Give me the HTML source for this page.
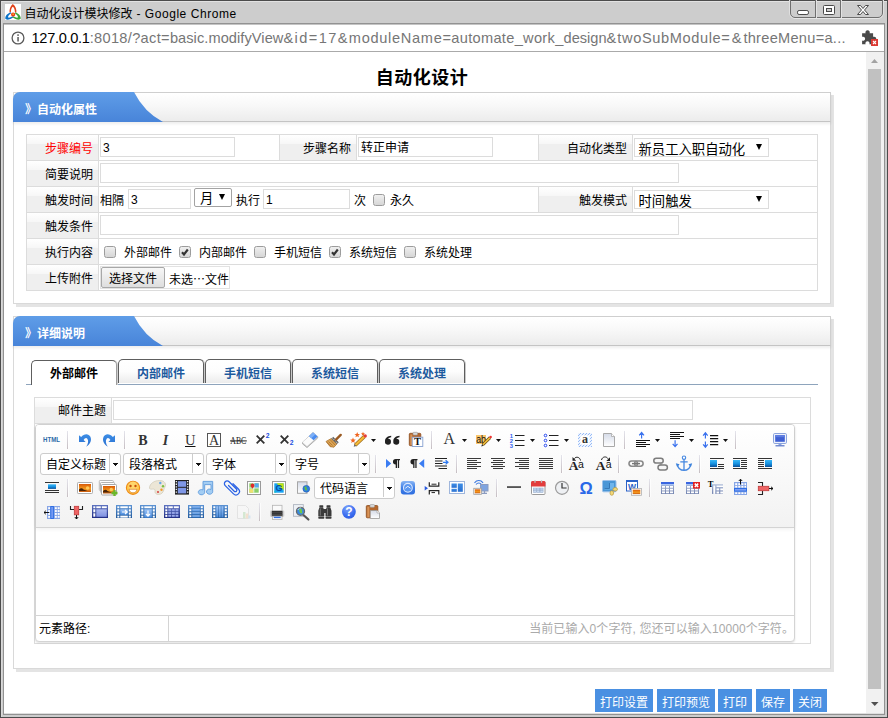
<!DOCTYPE html>
<html lang="zh-CN">
<head>
<meta charset="utf-8">
<title>自动化设计模块修改 - Google Chrome</title>
<style>
*{box-sizing:border-box;margin:0;padding:0}
html,body{width:888px;height:718px;overflow:hidden;background:#cdcdcd}
body{position:relative;font-family:"Liberation Sans","Noto Sans CJK SC",sans-serif;font-size:12px;color:#000}
.abs{position:absolute}
/* ---------- window frame ---------- */
#frame-outer{left:0;top:0;width:888px;height:718px;border:1px solid #4c4c4c}
#frame-hl{left:1px;top:1px;width:886px;height:716px;border-top:1px solid #e2e2e2;border-left:1px solid #d9d9d9}
#frame-inner{left:3px;top:23px;width:882px;height:692px;border:1px solid #929292;background:#fff;box-shadow:inset 0 1px 0 #c4c4c4, inset 0 -1px 0 #dedede}
#titletext{left:24.500px;top:5px;height:19px;line-height:19px;font-size:12px;color:#000;white-space:nowrap;font-family:"Liberation Sans","Noto Sans CJK SC",sans-serif}
#capbtns{left:790px;top:-1px;width:93px;height:19px;border:1px solid #6f6f6f;border-radius:0 0 5px 5px;box-shadow:0 1px 0 #e6e6e6, 1px 0 0 #e0e0e0, -1px 0 0 #e0e0e0}
#capbtns i{position:absolute;top:0;width:1px;height:18px;background:#6f6f6f;box-shadow:1px 0 0 #e2e2e2}
/* ---------- address bar ---------- */
#addr{left:4px;top:24px;width:880px;height:28px;background:#fff;border-top:1px solid #c4c4c4;border-bottom:1px solid #aaa}
#url{left:27.500px;top:3px;height:20px;line-height:20px;font-size:14.6px;color:#767676;white-space:nowrap;letter-spacing:0}
#url b{font-weight:normal;color:#000}
/* ---------- scrollbar ---------- */
#sb{left:866px;top:52px;width:18px;height:661px;background:#f1f1f1;overflow:hidden}
#sbthumb{left:2px;top:17px;width:13px;height:620px;background:#c1c1c1}
/* ---------- page ---------- */
#page{left:4px;top:52px;width:862px;height:661px;background:#fff;overflow:hidden}
#h1{left:9px;top:13px;width:818px;text-align:center;font-size:18px;font-weight:bold;line-height:26px;height:26px;letter-spacing:.5px}
.panel{left:9px;width:818px;border:1px solid #d9d9d9;background:#fff;box-shadow:3px 3px 0 #e4e4e4}
.phead{left:-1px;top:-1px;width:818px;height:30px;border:1px solid #cfcfcf;border-bottom-color:#c4c4c4;border-radius:7px 0 0 0;background:linear-gradient(#fff,#f9f9f9 40%,#ececec);box-shadow:0 2px 3px rgba(0,0,0,.07)}
.phead svg{position:absolute;left:-1px;top:-1px}
.phead span{position:absolute;left:11px;top:9px;line-height:16px;color:#fff;font-weight:bold;font-size:12px;white-space:nowrap}

/* ---------- form table ---------- */
.tbl{border:1px solid #dcdcdc;background:#fff}
.row{left:0;width:790px;height:26px;border-bottom:1px solid #dcdcdc}
.lab{top:0;height:25px;line-height:28px;overflow:hidden;text-align:right;padding-right:5px;background:linear-gradient(#fff 0,#f7f7f7 34%,#efefef 35%,#efefef 100%);border-right:1px solid #dcdcdc;white-space:nowrap}
.vd{top:0;width:1px;height:25px;background:#dcdcdc}
.inp{top:2px;height:20px;border:1px solid #dcdcdc;background:#fff;line-height:20px;padding-left:2px;font-size:12px;white-space:nowrap;overflow:hidden}
.txt{top:0;height:25px;line-height:28px;overflow:hidden;white-space:nowrap}
.sel{top:3px;height:19px;border:1px solid #dcdcdc;background:#fff;font-size:13.33px;line-height:21px;padding-left:3.5px;white-space:nowrap;overflow:hidden}
.sel:after{content:"";position:absolute;right:6px;top:5px;border:3px solid transparent;border-top:6px solid #000;border-bottom:0}
.cb{top:7px;width:12px;height:12px;border:1px solid #9c9c9c;border-radius:2.5px;background:linear-gradient(#efefef,#d6d6d6)}
.cb svg{position:absolute;left:0;top:0}

/* ---------- tabs ---------- */
.tab{top:42px;width:86px;height:24px;border:1px solid #5e5e5e;border-bottom:0;border-radius:5px 5px 0 0;background:linear-gradient(#fff,#fdfdfd 50%,#ececec);text-align:center;line-height:28px;overflow:hidden;font-weight:bold;color:#1d5a9e;box-shadow:1px 0 0 #c9c9c9}
.tab.on{top:43px;height:25px;background:#fff;color:#000;line-height:27px;border-right-color:#9c9c9c;box-shadow:1px 0 0 #d0d0d0}
/* ---------- editor ---------- */
#ed{left:0;top:26px;width:760px;height:218px;border:1px solid #d4d4d4;border-radius:4px;background:#fff;box-shadow:0 1px 2px rgba(0,0,0,.12)}
#tb{left:0;top:0;width:758px;height:103px;border-bottom:1px solid #d4d4d4;border-radius:3px 3px 0 0;background:linear-gradient(#fff,#f2f2f2);box-shadow:0 1px 4px rgba(0,0,0,.065)}
.sep{width:1px;height:18px;background:#c9bcbc;box-shadow:1px 0 0 #fff}
.cmb{width:81px;height:22px;border:1px solid #ccc;border-radius:3px;background:#fff;line-height:23px;padding-left:5px;font-size:12px;white-space:nowrap;overflow:hidden}
.cmb:before{content:"";position:absolute;right:10px;top:0;width:1px;height:19px;background:#ccc}
.cmb:after{content:"";position:absolute;right:2px;top:9px;width:5px;height:3px;background:linear-gradient(#111,#111) 0 0/5px 1px no-repeat,linear-gradient(#111,#111) 1px 1px/3px 1px no-repeat,linear-gradient(#111,#111) 2px 2px/1px 1px no-repeat}
.ic{width:24px;height:24px}
.ic svg{position:absolute;left:0;top:0}
.dd{width:0;height:0;border:2.5px solid transparent;border-top:3.5px solid #111;border-bottom:0}
#bb{left:0;top:190px;width:758px;height:26px;border-top:1px solid #d4d4d4;line-height:26px;overflow:hidden;font-size:12px}
.btn{top:637px;height:23px;background:#4a90e2;color:#fff;line-height:28px;overflow:hidden;text-align:center;font-size:12px}
</style>
</head>
<body>
<div class="abs" id="frame-outer"></div>
<div class="abs" id="frame-hl"></div>
<!-- title bar -->
<svg class="abs" style="left:5px;top:4px" width="16" height="16" viewBox="0 0 16 16">
 <rect width="16" height="16" fill="#fff"/>
 <path d="M7.800 0C10.600 2 11.900 6 11.300 8.800L9.900 8.100C9.900 5.600 9 3.500 7.800 2.700 6.700 3.500 5.900 5.600 5.900 8.100L4.600 8.800C4 6 5.300 2 7.800 0Z" fill="#e0421a"/>
 <path d="M5.600 8.200C2 9.500-.1 12.500.3 14.500.8 16.400 5.200 15.900 8.500 13.300L7.700 12.300C5.100 13.800 3.300 14 3.100 13.200 2.900 12 4.500 10.300 6.400 9.300Z" fill="#0a72c8"/>
 <path d="M10.400 8.200C14 9.500 16.100 12.500 15.700 14.500 15.200 16.400 10.800 15.900 7.500 13.300L8.300 12.300C10.900 13.800 12.700 14 12.900 13.200 13.100 12 11.500 10.300 9.600 9.300Z" fill="#3aa43a"/>
 <circle cx="8.100" cy="10.500" r="2.100" fill="#e8391c"/><circle cx="8.200" cy="10.200" r=".9" fill="#f8a820"/>
</svg>
<div class="abs" id="titletext">自动化设计模块修改<span style="letter-spacing:.55px"> - Google Chrome</span></div>
<div class="abs" id="capbtns"><i style="left:24px"></i><i style="left:49px"></i>
 <svg class="abs" style="left:0;top:0" width="91" height="18" viewBox="0 0 91 18">
  <rect x="6.5" y="10.5" width="11" height="4" rx="1.6" fill="#fff" stroke="#4a4a4a"/>
  <rect x="32.5" y="5.5" width="11" height="9" rx="1" fill="#fff" stroke="#4a4a4a"/>
  <rect x="35.5" y="8.500" width="5" height="3" fill="#cdcdcd" stroke="#4a4a4a"/>
  <path d="M66.5 5.5h3l2.5 3 2.500-3h3l-4 4.500 4 4.500h-3l-2.500-3-2.500 3h-3l4-4.500z" fill="#fff" stroke="#4a4a4a" stroke-width="1" stroke-linejoin="round"/>
 </svg>
</div>
<div class="abs" id="frame-inner"></div>
<!-- address bar -->
<div class="abs" id="addr">
 <svg class="abs" style="left:5.5px;top:4.5px" width="16" height="16" viewBox="0 0 16 16"><circle cx="8" cy="8" r="5.900" fill="none" stroke="#5a5a5a" stroke-width="1.300"/><rect x="7.300" y="7" width="1.500" height="4.500" fill="#5a5a5a"/><rect x="7.300" y="4.300" width="1.500" height="1.600" fill="#5a5a5a"/></svg>
 <div class="abs" id="url"><b style="letter-spacing:-.3px">127.0.0.1</b><span style="letter-spacing:.32px">:8018/?act=</span><span style="letter-spacing:.07px">basic.modifyView</span><span style="letter-spacing:1.39px">&amp;id=17&amp;</span><span style="letter-spacing:.69px">moduleName</span><span style="letter-spacing:.31px">=automate_work_</span>design<span style="letter-spacing:1px">&amp;</span><span style="letter-spacing:.62px">twoSubModule</span><span style="letter-spacing:1.9px">=&amp;</span><span style="letter-spacing:.28px">threeMenu=a...</span></div>
 <svg class="abs" style="left:857px;top:2px" width="24" height="22" viewBox="0 0 24 22">
  <path transform="translate(0 .3) scale(1.1)" d="M1 5.500h3.200a2 2 0 1 1 3.600 0H11v3.200a2 2 0 1 1 0 3.600V15.500H7.600a1.900 1.900 0 1 0-3.400 0H1v-3.400a1.900 1.900 0 1 0 0-3.400z" fill="#4a4a4a"/>
  <rect x="10" y="12" width="7" height="7" fill="#db3a34"/><path d="M12 14l3 3m0-3l-3 3" stroke="#fff" stroke-width="1.100"/>
 </svg>
</div>
<!-- scrollbar -->
<div class="abs" id="sb">
 <svg class="abs" style="left:0;top:0" width="18" height="17"><path d="M5 11l3.500-4 3.500 4z" fill="#a3a3a3"/></svg>
 <div class="abs" id="sbthumb"></div>
 <svg class="abs" style="left:0;top:645px" width="18" height="17"><path d="M5 5h7.500l-3.750 4z" fill="#505050"/></svg>
</div>
<!-- page -->
<div class="abs" id="page">
 <div class="abs" id="h1">自动化设计</div>

 <div class="abs panel" style="top:40px;height:212px">
  <div class="abs phead"><svg width="152" height="30" viewBox="0 0 152 30"><defs><linearGradient id="bg1" x1="0" y1="0" x2="0" y2="1"><stop offset="0" stop-color="#5f9de8"/><stop offset="1" stop-color="#4884d9"/></linearGradient></defs><path d="M0 30V7a7 7 0 0 1 7-7H121Q131 20 150 30z" fill="url(#bg1)"/></svg><span>》自动化属性</span></div>
  <div class="abs tbl" style="left:12px;top:41px;width:792px;height:157px">
   <div class="abs row" style="top:0">
    <div class="abs lab" style="left:0;width:72px;color:#f00">步骤编号</div>
    <div class="abs inp" style="left:73px;width:135px">3</div>
    <div class="abs vd" style="left:252px"></div>
    <div class="abs lab" style="left:253px;width:77px">步骤名称</div>
    <div class="abs inp" style="left:331px;width:135px">转正申请</div>
    <div class="abs vd" style="left:511px"></div>
    <div class="abs lab" style="left:512px;width:94px">自动化类型</div>
    <div class="abs sel" style="left:607px;width:135px">新员工入职自动化</div>
   </div>
   <div class="abs row" style="top:26px">
    <div class="abs lab" style="left:0;width:72px">简要说明</div>
    <div class="abs inp" style="left:73px;width:579px"></div>
   </div>
   <div class="abs row" style="top:52px">
    <div class="abs lab" style="left:0;width:72px">触发时间</div>
    <div class="abs txt" style="left:73px">相隔</div>
    <div class="abs inp" style="left:101px;width:63px">3</div>
    <div class="abs sel" style="left:167px;top:1px;width:38px;height:19px;border-color:#a3a3a3;border-radius:2px;line-height:20px;padding-left:5px">月</div>
    <div class="abs txt" style="left:209px">执行</div>
    <div class="abs inp" style="left:236px;width:87px">1</div>
    <div class="abs txt" style="left:327px">次</div>
    <div class="abs cb" style="left:346px"></div>
    <div class="abs txt" style="left:363px">永久</div>
    <div class="abs vd" style="left:511px"></div>
    <div class="abs lab" style="left:512px;width:94px">触发模式</div>
    <div class="abs sel" style="left:607px;width:135px">时间触发</div>
   </div>
   <div class="abs row" style="top:78px">
    <div class="abs lab" style="left:0;width:72px">触发条件</div>
    <div class="abs inp" style="left:73px;width:579px"></div>
   </div>
   <div class="abs row" style="top:104px">
    <div class="abs lab" style="left:0;width:72px">执行内容</div>
    <div class="abs cb" style="left:77px"></div><div class="abs txt" style="left:97px">外部邮件</div>
    <div class="abs cb" style="left:152px"><svg width="10" height="10" viewBox="0 0 10 10"><path d="M2 5.200l2 2.300 3.800-5" fill="none" stroke="#333" stroke-width="2.100"/></svg></div><div class="abs txt" style="left:172px">内部邮件</div>
    <div class="abs cb" style="left:227px"></div><div class="abs txt" style="left:247px">手机短信</div>
    <div class="abs cb" style="left:302px"><svg width="10" height="10" viewBox="0 0 10 10"><path d="M2 5.200l2 2.300 3.800-5" fill="none" stroke="#333" stroke-width="2.100"/></svg></div><div class="abs txt" style="left:322px">系统短信</div>
    <div class="abs cb" style="left:377px"></div><div class="abs txt" style="left:397px">系统处理</div>
   </div>
   <div class="abs row" style="top:130px;border-bottom:0">
    <div class="abs lab" style="left:0;width:72px">上传附件</div>
    <div class="abs" style="left:73px;top:1px;width:130px;height:23px;border:1px solid #e2e2e2"></div>
    <div class="abs" style="left:74px;top:2px;width:64px;height:21px;border:1px solid #a8a8a8;border-radius:2px;background:linear-gradient(#f7f7f7,#dedede);text-align:center;line-height:22px;font-size:12px;overflow:hidden">选择文件</div>
    <div class="abs txt" style="left:142px;font-family:'Noto Sans CJK SC','Liberation Sans',sans-serif">未选…文件</div>
   </div>
  </div>
 </div>


 <div class="abs panel" style="top:264px;height:353px">
  <div class="abs phead"><svg width="152" height="30" viewBox="0 0 152 30"><path d="M0 30V7a7 7 0 0 1 7-7H121Q131 20 150 30z" fill="url(#bg1)"/></svg><span>》详细说明</span></div>
  <div class="abs" style="left:12px;top:67px;width:792px;height:1px;background:#8ea4bc"></div>
  <div class="abs tab on" style="left:17px">外部邮件</div>
  <div class="abs tab" style="left:104px">内部邮件</div>
  <div class="abs tab" style="left:191px">手机短信</div>
  <div class="abs tab" style="left:278px">系统短信</div>
  <div class="abs tab" style="left:365px">系统处理</div>
  <div class="abs tbl" style="left:20px;top:80px;width:777px;height:247px">
   <div class="abs row" style="top:0;width:775px">
    <div class="abs lab" style="left:0;width:77px;line-height:26px">邮件主题</div>
    <div class="abs inp" style="left:78px;top:2px;width:580px;height:20px"></div>
   </div>
   <div class="abs" id="ed">
    <div class="abs" id="tb">

     <div class="abs cmb" style="left:4px;top:28px">自定义标题</div>
     <div class="abs cmb" style="left:87px;top:28px">段落格式</div>
     <div class="abs cmb" style="left:170px;top:28px">字体</div>
     <div class="abs cmb" style="left:253px;top:28px">字号</div>
     <div class="abs cmb" style="left:278px;top:52px">代码语言</div>
     <svg class="abs" id="tbsvg" style="left:0;top:0" width="758" height="102" viewBox="36 425 758 102">
      <defs>
       <linearGradient id="sepg" x1="0" y1="0" x2="0" y2="1"><stop offset="0" stop-color="#e4e4ec"/><stop offset="1" stop-color="#c6bec2"/></linearGradient>
       <linearGradient id="blu" x1="0" y1="0" x2="0" y2="1"><stop offset="0" stop-color="#3d8ee6"/><stop offset="1" stop-color="#2a6fd0"/></linearGradient>
       <linearGradient id="sq" x1="0" y1="0" x2="0" y2="1"><stop offset="0" stop-color="#38b8f8"/><stop offset=".55" stop-color="#1590e0"/><stop offset="1" stop-color="#0a4f98"/></linearGradient>
       <linearGradient id="pg" x1="0" y1="0" x2="0" y2="1"><stop offset="0" stop-color="#d5dbe8"/><stop offset="1" stop-color="#ffffff"/></linearGradient>
       <linearGradient id="sun" x1="0" y1="0" x2="0" y2="1"><stop offset="0" stop-color="#d85a08"/><stop offset=".6" stop-color="#f59a1e"/><stop offset="1" stop-color="#c85a10"/></linearGradient>
       <pattern id="hatch" width="3" height="3" patternUnits="userSpaceOnUse"><rect width="3" height="3" fill="#eef4ff"/><path d="M-1 1l2-2M0 3l3-3M2 4l2-2" stroke="#8fb6f5" stroke-width=".9"/></pattern>
       <linearGradient id="blu2" x1="0" y1="0" x2="0" y2="1"><stop offset="0" stop-color="#8ab6f4"/><stop offset=".5" stop-color="#3f7fe6"/><stop offset="1" stop-color="#2e6ee0"/></linearGradient>
       <linearGradient id="tbg" x1="0" y1="0" x2="0" y2="1"><stop offset="0" stop-color="#a9b8d8"/><stop offset="1" stop-color="#7585b0"/></linearGradient>
       <linearGradient id="dkb" x1="0" y1="0" x2="0" y2="1"><stop offset="0" stop-color="#5d73c0"/><stop offset="1" stop-color="#232f86"/></linearGradient>
       <linearGradient id="mdb" x1="0" y1="0" x2="0" y2="1"><stop offset="0" stop-color="#5c93d4"/><stop offset="1" stop-color="#245c9e"/></linearGradient>
       <linearGradient id="ltb" x1="0" y1="0" x2="0" y2="1"><stop offset="0" stop-color="#9ec4f6"/><stop offset="1" stop-color="#4d8fe0"/></linearGradient>
       <linearGradient id="lav" x1="0" y1="0" x2="0" y2="1"><stop offset="0" stop-color="#a9b8f0"/><stop offset="1" stop-color="#7f90e0"/></linearGradient>
       <radialGradient id="hlp" cx=".4" cy=".25" r=".9"><stop offset="0" stop-color="#7ea4fa"/><stop offset=".6" stop-color="#3a6cf0"/><stop offset="1" stop-color="#2a54d8"/></radialGradient>
       <path id="dd" d="M0 0h5l-2.500 3z" fill="#111"/>
       <g id="sepr"><rect width="1" height="18" fill="url(#sepg)"/><rect x="1" width="1" height="18" fill="#fff" opacity=".7"/></g>
       <path id="undo" d="M79 435.300V442h6.600l-2-2c1-1.700 2.600-2.600 3.700-1.300 1.400 1.600 1 4.900-1.100 8.100 3.800-2.500 5.900-6.300 4.200-10-1.800-3.800-6.500-3.200-9.200.100z"/>
      </defs>

      <g font-family="Liberation Serif,serif" fill="#333">
       <text x="43" y="442" font-family="Liberation Sans,sans-serif" font-size="7" font-weight="bold" fill="#2a6aa8" textLength="17" lengthAdjust="spacingAndGlyphs">HTML</text>
       <use href="#sepr" x="67" y="431"/>
       <use href="#undo" fill="url(#blu)"/>
       <use href="#undo" fill="url(#blu)" transform="translate(194 0) scale(-1 1)"/>
       <use href="#sepr" x="124" y="431"/>
       <text x="143" y="445" text-anchor="middle" font-weight="bold" font-size="14">B</text>
       <text x="165.500" y="445" text-anchor="middle" font-weight="bold" font-style="italic" font-size="14">I</text>
       <text x="190.200" y="445" text-anchor="middle" font-size="14.500">U</text>
       <rect x="185" y="446" width="10.500" height="1" fill="#111"/>
       <rect x="207.500" y="433.500" width="13" height="13" fill="#fff" stroke="#555"/>
       <text x="214" y="444.600" text-anchor="middle" font-size="14">A</text>
       <text x="230.300" y="443.800" font-size="11" textLength="16" lengthAdjust="spacingAndGlyphs" fill="#222">ABC</text>
       <rect x="230" y="440.400" width="16.800" height="1" fill="#222"/>
       <path d="M256.700 435.700l7.600 7.600m0-7.600l-7.600 7.600" stroke="#333" stroke-width="1.800" fill="none"/>
       <text x="265.800" y="438" font-family="Liberation Sans,sans-serif" font-weight="bold" font-size="6.800" fill="#1a4fe0">2</text>
       <path d="M280.700 435.700l7.600 7.600m0-7.600l-7.600 7.600" stroke="#333" stroke-width="1.800" fill="none"/>
       <text x="289.800" y="445.200" font-family="Liberation Sans,sans-serif" font-weight="bold" font-size="6.800" fill="#1a4fe0">2</text>
      </g>
      <!-- eraser -->
      <path d="M302.500 442.300L313 432.500l4.700 4v1.500L307 447.600l-4.500-3.800z" fill="#c9c9c9" stroke="#a3a3a3" stroke-width=".8"/>
      <path d="M302.500 442.300L313 432.500l4.700 4L307 446.200z" fill="#fbfbfb"/>
      <path d="M309 436.200l4-3.700 4.700 4-4.100 3.800z" fill="#4a8cf0"/>
      <path d="M309 436.200l4-3.700 2.300 2-4 3.700z" fill="#7db0f8"/>
      <!-- brush -->
      <path d="M331.200 438.600l5.600 5.400-2.800 3.200-3.800-.5-4.200-5.200 2.200-1.300z" fill="#dba556" stroke="#a56a24" stroke-width=".7"/>
      <path d="M328.500 441.500l4 4M330.500 440l4.500 5M327 442.300l4 4.200" stroke="#a0601c" stroke-width=".6"/>
      <path d="M332.200 437.600l5.600 5.600" stroke="#555" stroke-width="2.600"/>
      <path d="M332.200 437.600l5.600 5.600" stroke="#ddd" stroke-width="1.200" stroke-dasharray="1 1"/>
      <path d="M336 439.600l4.700-4.700" stroke="#9a5a22" stroke-width="2.400" stroke-linecap="round"/>
      <!-- autotypeset -->
      <path d="M355.200 445.200l9.300-8.800" stroke="#9a6a1c" stroke-width="3.600"/>
      <path d="M355.200 445.200l9.300-8.800" stroke="#f5b935" stroke-width="2.200"/>
      <path d="M353.700 446.800l.800-2.700 1.900 1.900z" fill="#666"/>
      <circle cx="365.200" cy="435.900" r="1.700" fill="#e43a3a"/>
      <g fill="#f0641e"><path id="star" d="M0-2.800l.8 1.900 2 .1-1.600 1.300.6 2L0 1.400l-1.800 1.100.6-2-1.600-1.300 2-.1z" transform="translate(357.200 434.800)"/><use href="#star" transform="translate(-4.200 5.600)"/><path d="M0-2l.6 1.400 1.400.1-1.100.9.400 1.400L0 1l-1.300.8.400-1.400-1.100-.9 1.400-.1z" transform="translate(363 433.800)"/></g>
      <use href="#dd" x="371" y="439"/>
      <g fill="#222"><path id="q6" d="M385 441.300c0-3.300 2.300-5.200 6.200-5.500v1.400c-1.900.4-2.800 1-3.100 1.500a3 3 0 1 1-3.100 2.600z"/><use href="#q6" x="8.300"/></g>
      <!-- pasteplain -->
      <rect x="409.300" y="433.300" width="11.500" height="12.400" rx="1" fill="#b5672c" stroke="#8c4c1e" stroke-width=".8"/>
      <rect x="410.300" y="434.500" width="2" height="10.500" fill="#d89458"/>
      <rect x="413" y="432.300" width="4.500" height="2.800" rx=".8" fill="#d8d8d8" stroke="#9a9a9a" stroke-width=".6"/>
      <rect x="412.200" y="437.200" width="10.600" height="9.300" fill="#fff" stroke="#86a0d0" stroke-width=".9"/>
      <text x="417.500" y="445" text-anchor="middle" font-family="Liberation Serif,serif" font-weight="bold" font-size="10.500" fill="#111">T</text>
      <use href="#sepr" x="431" y="431"/>
      <text x="449.400" y="443.800" text-anchor="middle" font-family="Liberation Serif,serif" font-size="16" fill="#333">A</text>
      <use href="#dd" x="462" y="439"/>
      <!-- backcolor -->
      <rect x="476" y="435" width="10" height="9" fill="#f9c66c"/>
      <text x="476.200" y="443.200" font-family="Liberation Sans,sans-serif" font-size="10.500" fill="#111" textLength="9.800" lengthAdjust="spacingAndGlyphs">ab</text>
      <path d="M482.800 444.800l7.200-7.200" stroke="#6a4a10" stroke-width="3"/>
      <path d="M482.800 444.800l7.200-7.200" stroke="#f2c23c" stroke-width="1.600"/>
      <path d="M481.300 446.400l.700-2.400 1.700 1.700z" fill="#333"/>
      <circle cx="490.600" cy="437" r="1.300" fill="#e33"/>
      <use href="#dd" x="496" y="439"/>
      <!-- lists -->
      <g font-family="Liberation Sans,sans-serif" font-weight="bold" font-size="5.800" fill="#2b5cf0"><text x="509.800" y="437.700">1</text><text x="509.800" y="442.600">2</text><text x="509.800" y="447.500">3</text></g>
      <path d="M515 435.500h9.500M515 440.500h9.500M515 445.500h9.500M549 435.500h9.500M549 440.500h9.500M549 445.500h9.500" stroke="#222" stroke-width="1.100"/>
      <use href="#dd" x="530" y="439"/>
      <g fill="#fff" stroke="#2446f0" stroke-width="1"><circle cx="545.500" cy="435.500" r="1.300"/><circle cx="545.500" cy="440.500" r="1.300"/><circle cx="545.500" cy="445.500" r="1.300"/></g>
      <use href="#dd" x="564" y="439"/>
      <!-- selectall -->
      <rect x="578" y="433" width="14" height="14" fill="url(#hatch)"/>
      <rect x="580.300" y="435.300" width="9.400" height="9.400" fill="#fff"/>
      <text x="585" y="443" text-anchor="middle" font-family="Liberation Serif,serif" font-weight="bold" font-size="12" fill="#333">a</text>
      <!-- cleardoc -->
      <path d="M603.500 433.500h8l3 3v10h-11z" fill="url(#pg)" stroke="#a9a9a9"/>
      <path d="M611.500 433.500v3h3" fill="#fff" stroke="#a9a9a9" stroke-width=".8"/>
      <use href="#sepr" x="624" y="431"/>
      <!-- rowspacing -->
      <path d="M641.600 438.500v-6M639.200 435.300l2.400-2.800 2.400 2.800M675.100 440.200v6M672.700 443.900l2.400 2.800 2.400-2.800M705.400 433v5.500M705.400 441.500v5.500M703.100 435.600l2.300-2.800 2.300 2.800M703.100 444.400l2.300 2.800 2.300-2.800" stroke="#3a72ee" stroke-width="1.200" fill="none"/>
      <path d="M636 440.500h14M636 442.500h10M636 444.500h14M636 446.500h10M670 432.500h14M670 434.500h10M670 436.500h14M670 438.500h10" stroke="#111" stroke-width="1"/>
      <use href="#dd" x="655" y="439"/>
      <use href="#dd" x="689" y="439"/>
      <path d="M710 435.600h8.200M710 438.600h8.200M710 441.600h8.200M710 444.600h8.200" stroke="#111" stroke-width="1.100"/>
      <use href="#dd" x="723" y="439"/>
      <use href="#sepr" x="735" y="431"/>
      <!-- fullscreen -->
      <rect x="773.500" y="433.500" width="13" height="10" rx="1.200" fill="#eef2fc" stroke="#8ba3dd"/>
      <rect x="775.200" y="435.200" width="9.600" height="6.600" fill="#3f60d3"/>
      <rect x="775.200" y="435.200" width="9.600" height="2" fill="#5f7ee2"/>
      <rect x="778.500" y="444" width="3" height="1.300" fill="#8ba3dd"/>
      <rect x="775.500" y="445.200" width="9" height="1.200" fill="#5573c8"/>

      <use href="#sepr" x="375" y="455"/>
      <path d="M386 459v9l5.200-4.500zM424.200 459v9l-5.200-4.500z" fill="#3a7cf2"/>
      <g fill="#222"><path d="M396 459h4v1.200h-.9v7.800h-1.300v-7.800h-.8v7.800h-1.300v-3.500a2.750 2.750 0 0 1 0-5.500z"/><path d="M413.500 459h4v1.200h-.9v7.800h-1.300v-7.800h-.8v7.800h-1.300v-3.500a2.750 2.750 0 0 1 0-5.500z"/></g>
      <path d="M435 458.500h12M435 461h7.500M435 463.500h7.500M435 466h12M438.500 468.500h8.500" stroke="#222" stroke-width="1.100"/>
      <path d="M443 462.300h4M445.600 460.200l2.400 2.100-2.400 2.100" stroke="#2f7af0" stroke-width="1.200" fill="none"/>
      <use href="#sepr" x="456" y="455"/>
      <path d="M467 458.5H481M467 460.5H477M467 462.5H481M467 464.5H477M467 466.5H481M467 468.5H477M491 458.5H505M493 460.5H503M491 462.5H505M493 464.5H503M491 466.5H505M493 468.5H503M515 458.5H529M519 460.5H529M515 462.5H529M519 464.5H529M515 466.5H529M519 468.5H529M539 458.5H553M539 460.5H553M539 462.5H553M539 464.5H553M539 466.5H553M539 468.5H553" stroke="#3a3a3a" stroke-width="1"/>
      <use href="#sepr" x="561" y="455"/>
      <!-- upper/lower case -->
      <g font-family="Liberation Serif,serif" fill="#222"><text x="573.500" y="470" text-anchor="middle" font-weight="bold" font-size="13.500">A</text><text x="580.800" y="468.200" text-anchor="middle" font-family="Liberation Sans,sans-serif" font-size="10.500" fill="#111">a</text>
      <text x="600.700" y="470" text-anchor="middle" font-weight="bold" font-size="13.500">A</text><text x="608.600" y="468.200" text-anchor="middle" font-family="Liberation Sans,sans-serif" font-size="10.500" fill="#111">a</text></g>
      <path d="M580.500 460.500c-.5-3.500-4.500-4.300-6.300-1.800M601.500 460c.8-3.600 5-4 6.500-1.300" stroke="#222" stroke-width="1" fill="none"/>
      <path d="M572.500 457v3.700h3.700zM610 457.200v3.700h-3.700z" fill="#222"/>
      <use href="#sepr" x="618" y="455"/>
      <!-- link -->
      <g fill="none" stroke="#8a8a8a" stroke-width="1.600"><rect x="629" y="461" width="8.500" height="5.200" rx="2.600"/><rect x="634.600" y="461" width="8.500" height="5.200" rx="2.600"/></g>
      <path d="M632 463.600h8" stroke="#777" stroke-width="1.400"/>
      <!-- unlink -->
      <g fill="#f6f6f6" stroke="#7d7d7d" stroke-width="1.500"><rect x="653.800" y="458.300" width="9.400" height="4.800" rx="2.400"/><rect x="658" y="465.100" width="9.400" height="4.800" rx="2.400"/></g>
      <path d="M660 463.300l1.500 1.800" stroke="#8a8a8a" stroke-width="2"/>
      <!-- anchor -->
      <g fill="none" stroke="#4688e0"><circle cx="684" cy="457.700" r="1.700" stroke-width="1.100" fill="#fff"/><path d="M684 459.500v10.500M680.300 461.800h7.400" stroke-width="1.300"/><path d="M677.300 464.300c.7 4 3.500 6 6.700 6s6-2 6.700-6" stroke-width="1.500"/></g>
      <path d="M675.800 463.300l3.800 1-2.500 2.600zM692.200 463.300l-3.800 1 2.500 2.600z" fill="#3c82dc"/>
      <use href="#sepr" x="699" y="455"/>
      <!-- image float -->
      <path d="M710 458.500h14M710 468.500h14M718 464.500h6M718 466.500h6M733 458.500h14M733 468.500h14M741 460.500h6M741 462.500h6M741 464.500h6M741 466.500h6M758 458.500h14M758 468.500h14M758 460.500h6M758 462.500h6M758 464.500h6M758 466.500h6" stroke="#333" stroke-width="1"/>
      <rect x="710" y="460" width="7" height="7" fill="url(#sq)"/><rect x="733" y="460" width="7" height="7" fill="url(#sq)"/><rect x="765" y="460" width="7" height="7" fill="url(#sq)"/>


      <!-- imagecenter -->
      <path d="M45 482.500h14M45 490.500h14M45 492.500h14" stroke="#333" stroke-width="1"/>
      <rect x="48" y="484.300" width="8" height="4.600" fill="url(#sq)"/>
      <use href="#sepr" x="67" y="479"/>
      <!-- simpleupload -->
      <g id="pic"><rect x="77.500" y="482.500" width="15" height="11" rx=".8" fill="#fff" stroke="#aeaeae"/><rect x="79" y="484" width="12" height="8" fill="url(#sun)"/><circle cx="87.600" cy="488" r="1.800" fill="#ffd060" opacity=".9"/><path d="M79 489.500c2-2 3.500-1 4.500 0l4 1.500h-8.500z" fill="#4a2408"/></g>
      <!-- insertimage -->
      <rect x="99.300" y="480.500" width="14" height="10" rx=".8" fill="#fff" stroke="#b9b9b9"/>
      <rect x="100.500" y="482.500" width="14" height="10" rx=".8" fill="#fff" stroke="#b4b4b4"/>
      <rect x="101.500" y="484.500" width="15" height="10.500" rx=".8" fill="#fff" stroke="#a8a8a8"/><rect x="103" y="486" width="12" height="7.500" fill="url(#sun)"/><circle cx="111.300" cy="489.500" r="1.700" fill="#ffd060" opacity=".9"/><path d="M103 491c2-2 3.500-1 4.500 0l4 1.500h-8.500z" fill="#4a2408"/>
      <path d="M114.500 490v6M111.500 493h6" stroke="#6cb82a" stroke-width="2.300"/>
      <!-- emotion -->
      <circle cx="133" cy="487.800" r="6.600" fill="#ffc94d" stroke="#ee8a18" stroke-width="1.100"/>
      <circle cx="133" cy="486" r="4.500" fill="#ffe082" opacity=".6"/>
      <circle cx="130.500" cy="486" r="1.200" fill="#c8500a"/><circle cx="135.500" cy="486" r="1.200" fill="#c8500a"/>
      <path d="M129 489.300h8c-.5 2.700-2.200 3.500-4 3.500s-3.500-.8-4-3.500z" fill="#fff" stroke="#d06a10" stroke-width=".6"/>
      <!-- scrawl -->
      <path d="M149.500 488c0-4.500 5-7.500 10-7.500 4 0 6 2 6 4.500 0 2-1.200 2.600-1.600 4.500-.5 2.800-2.400 5-5.400 5-2.500 0-3.800-1.600-3.500-3.300.3-1.600-.5-2.400-2.500-2.100-1.800.3-3-.1-3-1.100z" fill="#ece6d6" stroke="#cfc8b4" stroke-width=".7"/>
      <circle cx="160.300" cy="483" r="1.200" fill="#6aa8e8"/><circle cx="163" cy="486.300" r="1.200" fill="#7cc040"/><circle cx="161.500" cy="489.800" r="1.200" fill="#f09a30"/><circle cx="158" cy="492" r="1.100" fill="#d84a4a"/>
      <!-- video -->
      <rect x="175" y="480" width="14" height="14.600" fill="#222"/>
      <rect x="177.800" y="481.200" width="8.400" height="5.600" fill="#7f97e6"/><rect x="177.800" y="487.800" width="8.400" height="5.600" fill="#7f97e6"/>
      <path d="M176.300 481v13M187.700 481v13" stroke="#fff" stroke-width="1.200" stroke-dasharray="1.300 1.300"/>
      <!-- music -->
      <path d="M203 481.400h9.700v10.300a3.100 2.500 0 1 1-1.700-2.200v-4.900h-6.300v7.600a3.200 2.600 0 1 1-1.700-2.300z" fill="#a3cdf3" stroke="#5f9bdc" stroke-width=".9" stroke-linejoin="round"/>
      <!-- attachment -->
      <path d="M228.500 485.500l5.700 5.700a1.500 1.500 0 0 0 2.200-2.200l-7.300-7.300a2.700 2.700 0 0 0-3.900 3.900l8.300 8.300a3.400 3.400 0 0 0 4.900-4.900l-5.400-5.400" fill="none" stroke="#2a62e4" stroke-width="1.250" stroke-linecap="round"/>
      <!-- map -->
      <rect x="247.500" y="481.500" width="13" height="13" fill="#fff" stroke="#9a9a9a"/>
      <rect x="249.300" y="483.300" width="9.400" height="9.400" fill="#8ccf6a"/><rect x="254.500" y="483.300" width="4.200" height="4.500" fill="#58a8ee"/><rect x="249.300" y="489" width="4" height="3.700" fill="#f0e070"/><path d="M249.300 488h9.400M253.800 483.300v9.400" stroke="#fff" stroke-width=".8"/><path d="M252.500 483.500a1.900 1.900 0 0 1 1.900 1.900c0 1.400-1.900 3-1.900 3s-1.900-1.600-1.900-3a1.900 1.900 0 0 1 1.900-1.900z" fill="#e02a2a"/>
      <!-- gmap -->
      <rect x="272.500" y="481.500" width="13" height="13" fill="#fff" stroke="#9a9a9a"/>
      <rect x="274.300" y="483.300" width="9.400" height="9.400" fill="#18a2f2"/><path d="M276.500 483.300h7.200v7.200z" fill="#c5e414"/><path d="M274.300 490.500l2.200 2.200h-2.200z" fill="#20c8c0"/>
      <text x="279" y="491.400" text-anchor="middle" font-family="Liberation Sans,sans-serif" font-weight="bold" font-size="9" fill="#0b4aa0">G</text>
      <!-- insertframe -->
      <rect x="297.500" y="481.800" width="9.500" height="11.500" fill="url(#pg)" stroke="#a6a6a6"/>
      <circle cx="306.300" cy="488.800" r="3.400" fill="#2f7fe0" stroke="#1c58b0" stroke-width=".6"/><path d="M304.300 487.300c1-1.600 2.600-.8 2.200.5-.3 1 1 1 .6 2.200-.4 1-1.800.3-2-.6z" fill="#60c040"/>
      <!-- webapp -->
      <rect x="400.800" y="481" width="14.200" height="13.600" rx="3" fill="url(#blu2)"/>
      <circle cx="407.900" cy="487.800" r="4.400" fill="#5b97f0" stroke="#dbe8ff" stroke-width="1.100"/><path d="M405.300 488.300l2.600-2 2.600 2" stroke="#e8f0ff" stroke-width="1" fill="none"/>
      <!-- pagebreak -->
      <path d="M424.700 486v4.600l3.300-2.300z" fill="#2a5ae0"/>
      <path d="M429.300 482.200v4h9.500v-4M429.300 494.600v-4h9.500v4" fill="#fff" stroke="#222" stroke-width="1.200"/><path d="M431.500 484.200h5M431.500 492.600h3.500" stroke="#222" stroke-width="1"/>
      <!-- template -->
      <rect x="449.500" y="481.500" width="15" height="12" fill="#fff" stroke="#9fb6dc"/>
      <rect x="451.500" y="483.500" width="5.300" height="4.300" fill="url(#blu)"/><rect x="451.500" y="488.800" width="5.300" height="3" fill="url(#blu)"/><rect x="457.800" y="483.500" width="5" height="8.300" fill="url(#blu)"/>
      <!-- background -->
      <path d="M476 484.500c1.500-2 4-2 5.500 0M474.500 482.800c2.400-3 6.200-3 8.600 0" stroke="#3a78e0" stroke-width="1.100" fill="none"/>
      <rect x="480.500" y="484.500" width="7.500" height="6.500" fill="#7fa4e0" stroke="#8c9cc0"/><path d="M482 493.300h5M484.500 491v2" stroke="#8c9cc0" stroke-width="1.200"/>
      <rect x="473.800" y="488.300" width="7.600" height="6" fill="#fff" stroke="#9a9a9a" stroke-width=".8"/><rect x="474.800" y="489.300" width="5.600" height="4" fill="url(#sun)"/>
      <use href="#sepr" x="496" y="479"/>
      <!-- horizontal -->
      <rect x="507" y="486.400" width="14" height="1.300" fill="#111"/>
      <!-- date -->
      <rect x="531.500" y="481.500" width="13.500" height="13" rx="1" fill="#fff" stroke="#9a9a9a"/>
      <path d="M531 482.500a1.500 1.500 0 0 1 1.500-1.500h11.500a1.500 1.500 0 0 1 1.500 1.500v4h-14.500z" fill="#e23c3c"/>
      <path d="M535 480.300v2.400M541.500 480.300v2.400" stroke="#c0c0c0" stroke-width="1.300"/>
      <g fill="#c6d8f0" stroke="#8ea6c8" stroke-width=".5"><rect x="533.500" y="488" width="3" height="2"/><rect x="536.800" y="488" width="3" height="2"/><rect x="540.100" y="488" width="3" height="2"/><rect x="533.500" y="490.500" width="3" height="2"/><rect x="536.800" y="490.500" width="3" height="2"/><rect x="540.100" y="490.500" width="3" height="2"/></g>
      <!-- time -->
      <circle cx="562" cy="487.800" r="6.500" fill="#eef0f3" stroke="#9a9a9a" stroke-width="1.200"/>
      <path d="M562 483v5h4.600" stroke="#333" stroke-width="1.200" fill="none"/>
      <!-- spechars -->
      <text x="586.100" y="493.800" text-anchor="middle" font-family="Liberation Sans,sans-serif" font-weight="bold" font-size="16.500" fill="#2a68e8">Ω</text>
      <!-- snapscreen -->
      <rect x="602.500" y="480.500" width="13.500" height="11.300" rx="1" fill="#4a96d6" stroke="#9cc0ea"/>
      <path d="M604.500 488h5v-5h4.500v6.500h-9.500z" fill="#79bdf0" opacity=".8"/><path d="M609.500 483v5.500h-5" stroke="#2a6aa8" stroke-width=".8" fill="none"/>
      <g fill="#f2d878" stroke="#b8963a" stroke-width=".7"><ellipse cx="615.200" cy="489.300" rx="2.300" ry="1.800"/><ellipse cx="611.800" cy="493" rx="1.800" ry="2.300"/></g>
      <!-- wordimage -->
      <rect x="626.500" y="480.500" width="11" height="10.500" fill="#fff" stroke="#2c63c8"/><rect x="626" y="480" width="12" height="2" fill="#2c63c8"/>
      <text x="632" y="489.800" text-anchor="middle" font-family="Liberation Sans,sans-serif" font-weight="bold" font-size="8.500" fill="#2a62c6">W</text>
      <rect x="631.500" y="488.500" width="10" height="6.800" fill="#fff" stroke="#b0b0b0" stroke-width=".8"/><rect x="632.700" y="489.700" width="7.600" height="4.400" fill="url(#sun)"/>
      <use href="#sepr" x="649" y="479"/>
      <!-- inserttable -->
      <g id="tblic"><rect x="661" y="482" width="13" height="12" fill="url(#tbg)"/><rect x="661" y="482" width="13" height="2" fill="#3a66e0"/><rect x="661" y="484" width="13" height="1.300" fill="#a9c4f4"/>
      <g fill="#fff"><rect x="662" y="486" width="3" height="1.800"/><rect x="666" y="486" width="3" height="1.800"/><rect x="670" y="486" width="3" height="1.800"/><rect x="662" y="488.700" width="3" height="1.800"/><rect x="666" y="488.700" width="3" height="1.800"/><rect x="670" y="488.700" width="3" height="1.800"/><rect x="662" y="491.400" width="3" height="1.800"/><rect x="666" y="491.400" width="3" height="1.800"/><rect x="670" y="491.400" width="3" height="1.800"/></g></g>
      <!-- deletetable -->
      <use href="#tblic" x="25"/>
      <rect x="693" y="482" width="7" height="6.600" fill="#e32222"/><path d="M694.800 483.600l3.400 3.400m0-3.400l-3.400 3.400" stroke="#fff" stroke-width="1.500"/>
      <!-- insertparagraphbeforetable -->
      <text x="710.600" y="487" text-anchor="middle" font-family="Liberation Serif,serif" font-weight="bold" font-size="8.500" fill="#000">T</text>
      <rect x="712" y="484.300" width="11" height="9.600" fill="url(#tbg)"/><g fill="#fff"><rect x="713.300" y="485.500" width="2" height="8.400"/><rect x="716.500" y="485.500" width="6.500" height="1.600"/><rect x="716.500" y="488.400" width="2.600" height="2"/><rect x="720.300" y="488.400" width="2.700" height="2"/><rect x="716.500" y="491.500" width="2.600" height="2"/><rect x="720.300" y="491.500" width="2.700" height="2"/></g>
      <!-- insertrow -->
      <rect x="734" y="482" width="13" height="13" fill="#88a6e6"/>
      <g fill="#fff"><rect x="735.200" y="483.200" width="2" height="2"/><rect x="738.300" y="483.200" width="2" height="2"/><rect x="741.400" y="483.200" width="2" height="2"/><rect x="744.500" y="483.200" width="1.500" height="2"/><rect x="735.200" y="486" width="2" height="1.600"/><rect x="738.300" y="486" width="2" height="1.600"/><rect x="741.400" y="486" width="2" height="1.600"/><rect x="744.500" y="486" width="1.500" height="1.600"/><rect x="735.200" y="492.300" width="2" height="1.700"/><rect x="738.300" y="492.300" width="2" height="1.700"/><rect x="741.400" y="492.300" width="2" height="1.700"/><rect x="744.500" y="492.300" width="1.500" height="1.700"/></g>
      <rect x="734" y="488" width="13" height="3.600" fill="#2f6fe4"/><rect x="735" y="489" width="11" height="1.600" fill="#7d9ef4"/>
      <path d="M740.500 484.500v-5M738.800 481l1.700-1.800 1.700 1.800" stroke="#111" stroke-width="1" fill="none"/>
      <!-- deleterow -->
      <path d="M758 482.500h4.500v3.500M758 494.500h4.500v-3.500" stroke="#222" stroke-width="1.100" fill="none"/>
      <rect x="758.300" y="486.300" width="10.500" height="4.400" fill="#ee6464" stroke="#c23a3a" stroke-width=".8"/>
      <path d="M769 488.500h4M771 486.800l2 1.700-2 1.700" stroke="#111" stroke-width="1" fill="none"/>


      <!-- insertcol -->
      <rect x="47" y="506" width="13" height="13" fill="#88a6e6"/>
      <g fill="#fff"><rect x="48.2" y="507.2" width="1.9" height="1.9"/><rect x="54.9" y="507.2" width="1.9" height="1.9"/><rect x="57.7" y="507.2" width="1.9" height="1.9"/><rect x="48.2" y="510.1" width="1.9" height="1.9"/><rect x="54.9" y="510.1" width="1.9" height="1.9"/><rect x="57.7" y="510.1" width="1.9" height="1.9"/><rect x="48.2" y="513" width="1.9" height="1.9"/><rect x="54.9" y="513" width="1.9" height="1.9"/><rect x="57.7" y="513" width="1.9" height="1.9"/><rect x="48.2" y="515.9" width="1.9" height="1.9"/><rect x="54.9" y="515.9" width="1.9" height="1.9"/><rect x="57.7" y="515.9" width="1.9" height="1.9"/></g>
      <rect x="50.300" y="506" width="3.600" height="13" fill="#2f6fe4"/><rect x="51.300" y="507" width="1.600" height="11" fill="#7d9ef4"/>
      <path d="M49 512.500h-5M45.800 510.800l-1.800 1.700 1.800 1.700" stroke="#111" stroke-width="1" fill="none"/>
      <!-- deletecol -->
      <path d="M70.500 506v3.500h3.500M82.500 506v3.500h-3.500" stroke="#222" stroke-width="1.100" fill="none"/>
      <rect x="74.300" y="506.300" width="4.400" height="8.500" fill="#ee6464" stroke="#c23a3a" stroke-width=".8"/>
      <path d="M76.500 515v4M74.800 517l1.700 2 1.700-2" stroke="#111" stroke-width="1" fill="none"/>
      <!-- mergecells -->
      <rect x="92" y="505" width="16" height="13" fill="url(#dkb)"/>
      <g fill="#fff"><rect x="93.300" y="506.300" width="2" height="1.900"/><rect x="96.300" y="506.300" width="4.500" height="1.900"/><rect x="101.800" y="506.300" width="5" height="1.900"/><rect x="93.300" y="509.300" width="2" height="3"/><rect x="93.300" y="513.300" width="2" height="3.400"/></g>
      <rect x="96.300" y="509.300" width="10.500" height="7.500" fill="url(#lav)"/>
      <!-- mergeright -->
      <rect x="116" y="505" width="16" height="13" fill="url(#mdb)"/>
      <g fill="#fff"><rect x="117.300" y="506.300" width="2" height="1.900"/><rect x="120.300" y="506.300" width="7.500" height="1.900"/><rect x="128.800" y="506.300" width="2" height="1.900"/><rect x="117.300" y="509.300" width="2" height="2.200"/><rect x="117.300" y="512.500" width="2" height="2.200"/><rect x="128.800" y="509.300" width="2" height="2.200"/><rect x="128.800" y="512.500" width="2" height="2.200"/><rect x="117.300" y="515.700" width="2" height="1.900"/><rect x="120.300" y="515.700" width="7.500" height="1.900"/><rect x="128.800" y="515.700" width="2" height="1.900"/></g>
      <rect x="120.300" y="509.300" width="7.500" height="5.400" fill="url(#ltb)"/>
      <path d="M122 512h5M125 510l2.200 2-2.200 2" stroke="#fff" stroke-width="1.200" fill="none"/>
      <!-- mergedown -->
      <rect x="140" y="505" width="16" height="13" fill="url(#mdb)"/>
      <g fill="#fff"><rect x="141.300" y="506.300" width="2" height="1.900"/><rect x="144.300" y="506.300" width="7.500" height="1.900"/><rect x="152.800" y="506.300" width="2" height="1.900"/><rect x="141.300" y="509.300" width="2" height="2.200"/><rect x="141.300" y="512.500" width="2" height="2.200"/><rect x="152.800" y="509.300" width="2" height="2.200"/><rect x="152.800" y="512.500" width="2" height="2.200"/><rect x="141.300" y="515.700" width="2" height="1.900"/><rect x="152.800" y="515.700" width="2" height="1.900"/></g>
      <rect x="144.300" y="509.300" width="7.500" height="8.300" fill="url(#ltb)"/>
      <path d="M148 510.500v5.500M146 514l2 2.200 2-2.200" stroke="#fff" stroke-width="1.200" fill="none"/>
      <!-- splittocells -->
      <rect x="164" y="505" width="16" height="13" fill="url(#dkb)"/>
      <g fill="#fff"><rect x="165.300" y="506.300" width="2" height="1.900"/><rect x="168.300" y="506.300" width="4.500" height="1.900"/><rect x="173.800" y="506.300" width="5" height="1.900"/><rect x="165.300" y="509.300" width="2" height="2"/><rect x="165.300" y="512.100" width="2" height="2"/><rect x="165.300" y="514.900" width="2" height="2"/></g>
      <g fill="url(#lav)"><rect x="168.3" y="509.3" width="2.9" height="2"/><rect x="171.9" y="509.3" width="2.9" height="2"/><rect x="175.5" y="509.3" width="2.9" height="2"/><rect x="168.3" y="512.1" width="2.9" height="2"/><rect x="171.9" y="512.1" width="2.9" height="2"/><rect x="175.5" y="512.1" width="2.9" height="2"/><rect x="168.3" y="514.9" width="2.9" height="2"/><rect x="171.9" y="514.9" width="2.9" height="2"/><rect x="175.5" y="514.9" width="2.9" height="2"/></g>
      <!-- splittorows -->
      <rect x="188" y="505" width="16" height="13" fill="url(#mdb)"/>
      <g fill="#fff"><rect x="189.3" y="506.3" width="2" height="1.9"/><rect x="200.8" y="506.3" width="2" height="1.9"/><rect x="189.3" y="509.3" width="2" height="1.9"/><rect x="200.8" y="509.3" width="2" height="1.9"/><rect x="189.3" y="512.3" width="2" height="1.9"/><rect x="200.8" y="512.3" width="2" height="1.9"/><rect x="189.3" y="515.3" width="2" height="1.9"/><rect x="200.8" y="515.3" width="2" height="1.9"/></g>
      <g fill="url(#ltb)"><rect x="192.3" y="506.3" width="7.5" height="1.9"/><rect x="192.3" y="509.3" width="7.5" height="1.9"/><rect x="192.3" y="512.3" width="7.5" height="1.9"/><rect x="192.3" y="515.3" width="7.5" height="1.9"/></g>
      <!-- splittocols -->
      <rect x="212" y="505" width="16" height="13" fill="url(#mdb)"/>
      <g fill="#fff"><rect x="213.3" y="506.3" width="2" height="1.9"/><rect x="224.8" y="506.3" width="2" height="1.9"/><rect x="213.3" y="509.3" width="2" height="1.9"/><rect x="224.8" y="509.3" width="2" height="1.9"/><rect x="213.3" y="512.3" width="2" height="1.9"/><rect x="224.8" y="512.3" width="2" height="1.9"/><rect x="213.3" y="515.3" width="2" height="1.9"/><rect x="224.8" y="515.3" width="2" height="1.9"/></g>
      <g fill="url(#ltb)"><rect x="216.3" y="506.3" width="1.8" height="10.9"/><rect x="218.9" y="506.3" width="1.8" height="10.9"/><rect x="221.5" y="506.3" width="1.8" height="10.9"/></g>
      <!-- charts (disabled) -->
      <g opacity=".22"><path d="M237.500 505.500h8l3 3v10h-11z" fill="#fff" stroke="#a9a9a9"/><rect x="243" y="512" width="2.500" height="6.500" fill="#6cc060"/><rect x="245.800" y="513.500" width="2.400" height="5" fill="#f0a050"/><rect x="248.400" y="515.500" width="2" height="3" fill="#60b0e8"/></g>
      <use href="#sepr" x="259" y="503"/>
      <!-- print -->
      <rect x="272.500" y="505.300" width="9.500" height="6.500" fill="#fafafa" stroke="#b4b4b4" stroke-width=".8"/>
      <rect x="270" y="510.500" width="14.300" height="6.300" rx="1" fill="#cfcfcf"/><rect x="271.800" y="510.800" width="10.700" height="5.800" fill="#333"/><path d="M271.800 512.700h10.700M271.800 514.600h10.700" stroke="#555" stroke-width=".6"/>
      <rect x="272.500" y="516.200" width="9.500" height="3.200" fill="#fafafa" stroke="#b4b4b4" stroke-width=".8"/><rect x="273.800" y="516.700" width="6.900" height="1.400" fill="#2f6fe4"/>
      <!-- preview -->
      <rect x="293.500" y="504.600" width="9.800" height="11.700" fill="#eef1f6" stroke="#b0b6c0" stroke-width=".9"/>
      <path d="M303.400 515l5 4.500" stroke="#555" stroke-width="2.200" stroke-linecap="round"/>
      <circle cx="300.500" cy="511.300" r="4" fill="#3a8ae0" stroke="#6a6a6a" stroke-width="1.300"/><path d="M299 509.500c1.500-1.500 3.500-.5 3 1-.4 1 .8 1.500.2 2.600-.6 1-2.400.2-2.600-1z" fill="#70c848"/><path d="M297.800 510c.8-1.500 2-2.200 3.300-2.200" stroke="#fff" stroke-width=".8" fill="none" opacity=".8"/>
      <!-- searchreplace -->
      <g fill="#3a3a3a"><rect x="319.300" y="505.200" width="4" height="2" rx=".6"/><rect x="326.500" y="505.200" width="4" height="2" rx=".6"/><path d="M319.500 507.200h3.600l1.200 3.500v5.500h-6v-5.500zM326.700 507.200h3.600l1.200 3.500v5.500h-6v-5.500z"/><rect x="323" y="509" width="3.800" height="4"/><rect x="318.300" y="516.600" width="6" height="2.100" rx=".6"/><rect x="325.500" y="516.600" width="6" height="2.100" rx=".6"/></g>
      <path d="M320.300 508.500v7M327.500 508.500v7" stroke="#7a7a7a" stroke-width=".9"/>
      <!-- help -->
      <circle cx="348.900" cy="511.800" r="6.900" fill="url(#hlp)"/>
      <text x="348.900" y="516.200" text-anchor="middle" font-family="Liberation Sans,sans-serif" font-weight="bold" font-size="12" fill="#fff">?</text>
      <!-- drafts -->
      <rect x="366.300" y="505.500" width="11.500" height="12.300" rx="1" fill="#b5672c" stroke="#8c4c1e" stroke-width=".8"/>
      <rect x="367.300" y="506.700" width="2" height="10.500" fill="#d89458"/>
      <rect x="370" y="504.500" width="4.500" height="2.800" rx=".8" fill="#d8d8d8" stroke="#9a9a9a" stroke-width=".6"/>
      <path d="M370.300 510.500h6.700l2.500 2.500v5.500h-9.200z" fill="url(#pg)" stroke="#9a9a9a" stroke-width=".8"/><path d="M377 510.500v2.500h2.500" fill="#fff" stroke="#9a9a9a" stroke-width=".6"/>

     </svg>

    </div>
    <div class="abs" id="bb"><span class="abs" style="left:3px;top:0">元素路径:</span><i class="abs" style="left:132px;top:0;width:1px;height:25px;background:#d4d4d4"></i><span class="abs" style="right:0;top:0;color:#aaa;white-space:nowrap;letter-spacing:.08px">当前已输入0个字符, 您还可以输入10000个字符。</span></div>
   </div>
  </div>
 </div>


 <div class="abs btn" style="left:591px;width:58px">打印设置</div>
 <div class="abs btn" style="left:653px;width:58px">打印预览</div>
 <div class="abs btn" style="left:714px;width:34px">打印</div>
 <div class="abs btn" style="left:752px;width:34px">保存</div>
 <div class="abs btn" style="left:789px;width:34px">关闭</div>

</div>
</body>
</html>
